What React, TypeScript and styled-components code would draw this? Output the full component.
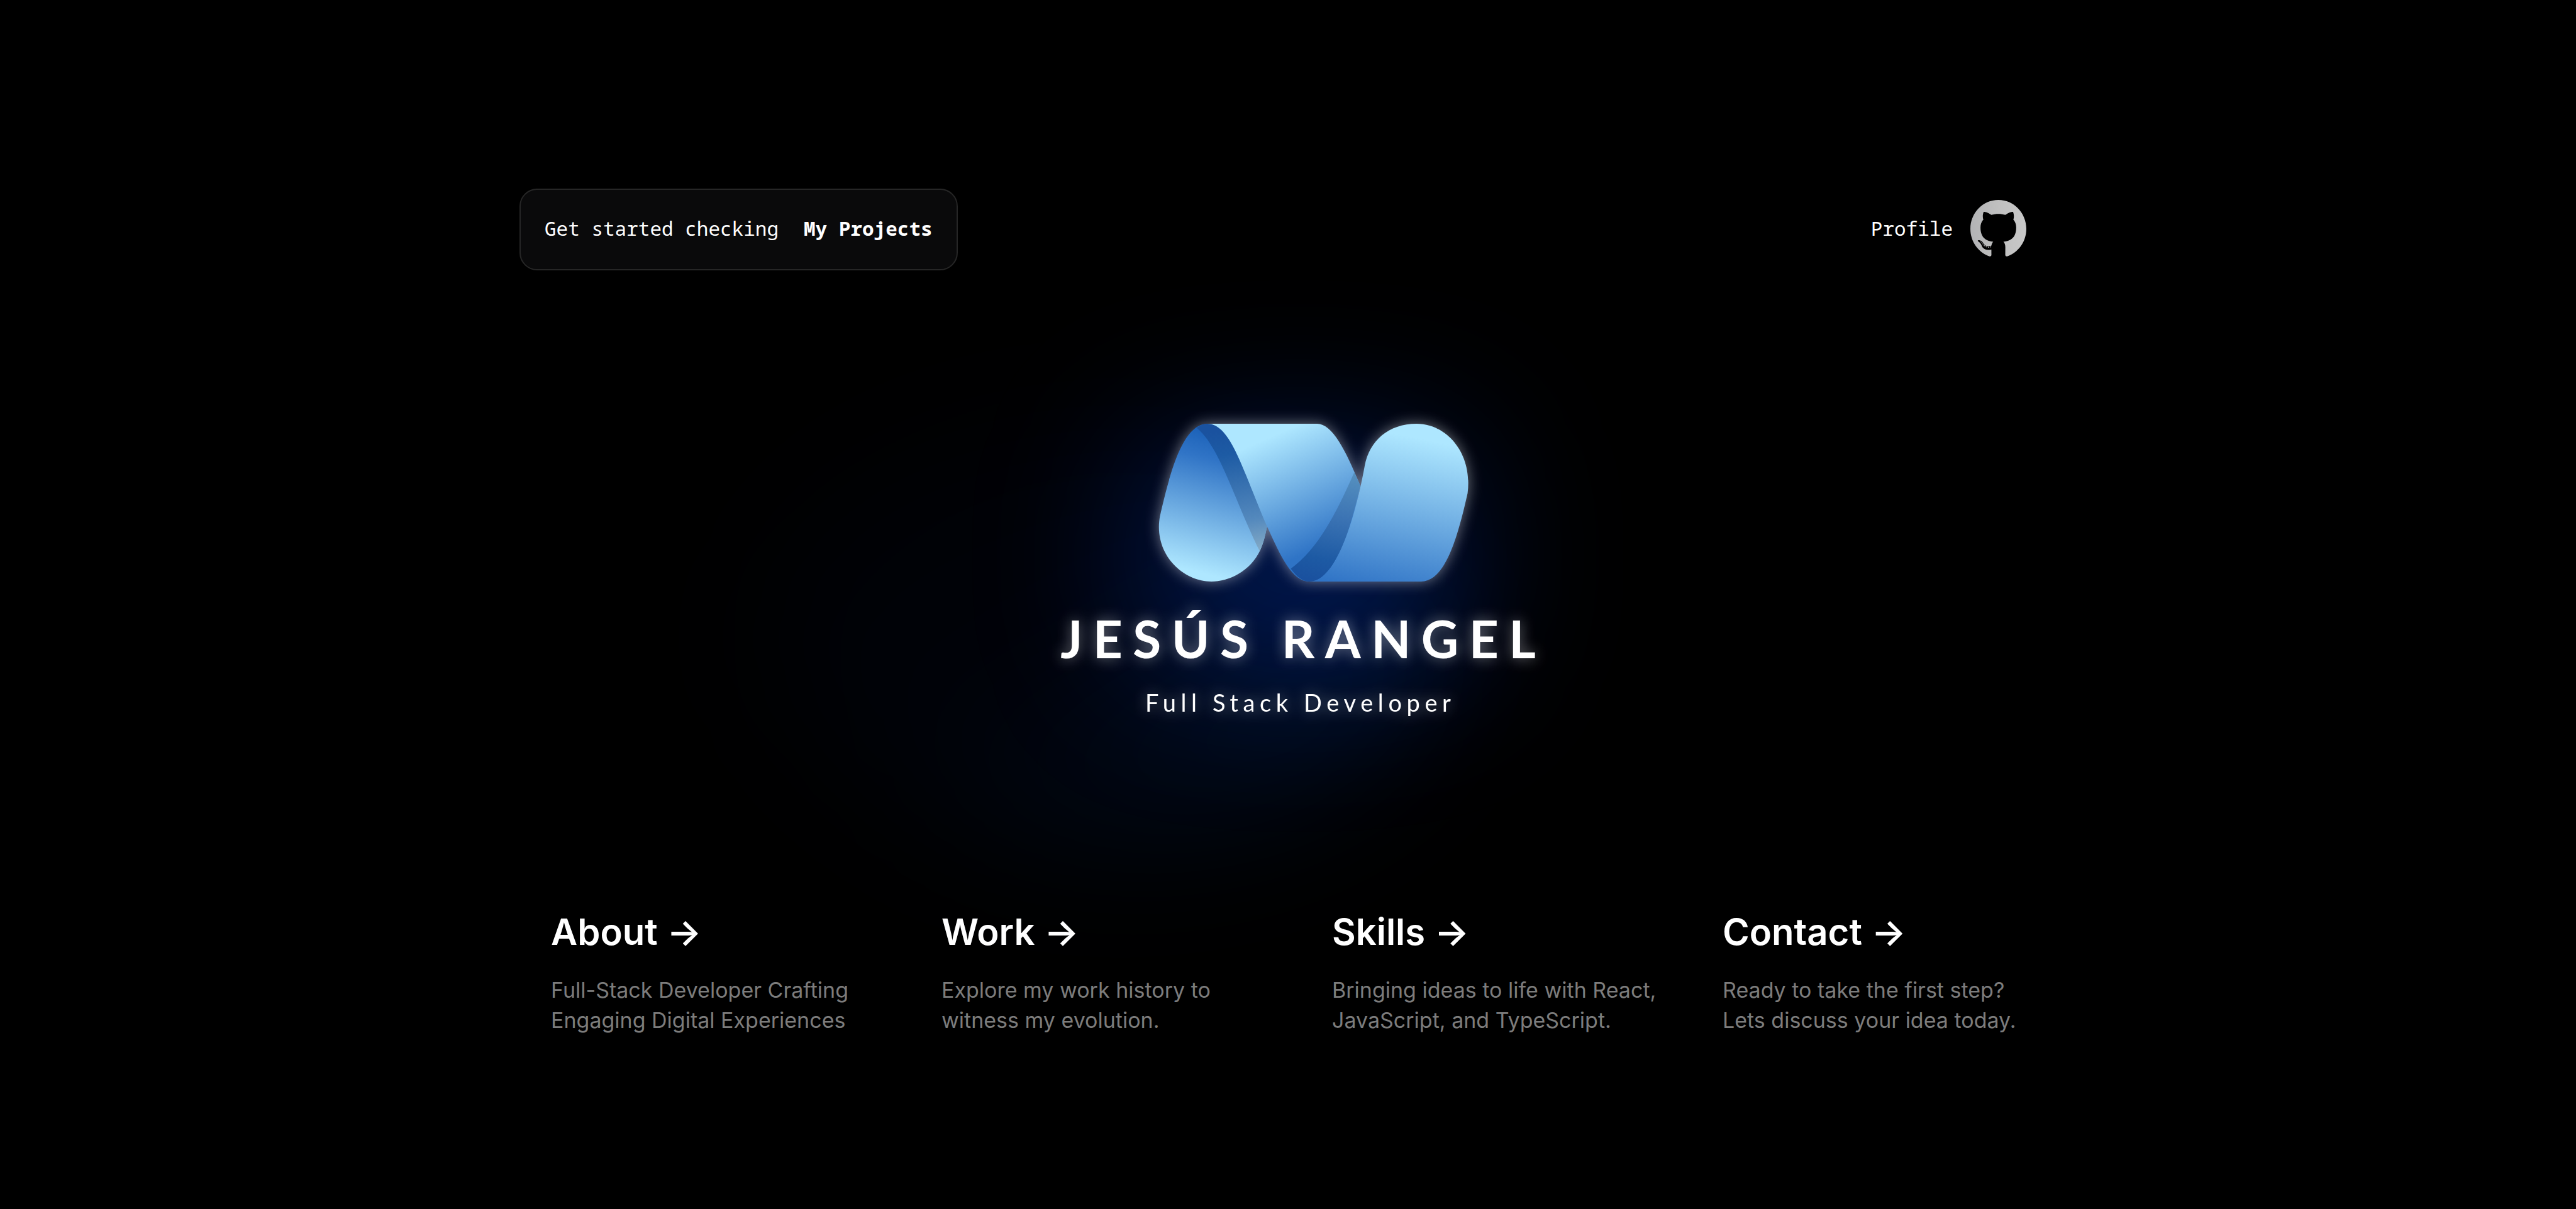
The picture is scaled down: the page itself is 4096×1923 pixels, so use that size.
import React from "react";
import styled, { createGlobalStyle } from "styled-components";

const GlobalStyle = createGlobalStyle`
  * { box-sizing: border-box; margin: 0; padding: 0; }
  body {
    background: #000;
    color: #fff;
    font-family: Inter, "Liberation Sans", sans-serif;
  }
  a { color: inherit; text-decoration: none; }
`;

const Page = styled.main`
  min-height: 100vh;
  display: flex;
  flex-direction: column;
  align-items: center;
  padding: 300px 24px 276px;
  overflow: hidden;
`;

const Header = styled.header`
  width: 100%;
  max-width: 2484px;
  display: flex;
  align-items: center;
  justify-content: space-between;
  padding: 0 68px 0 20px;
  font-family: "Noto Sans Mono", "DejaVu Sans Mono", monospace;
  font-size: 31px;
  line-height: 54px;
`;

const Intro = styled.p`
  display: flex;
  gap: 40px;
  padding: 34px 38px 38px;
  border: 2px solid #262626;
  border-radius: 28px;
  background: #0a0a0b;
  white-space: nowrap;
`;

const ProjectsLink = styled.a`
  font-weight: 700;
`;

const ProfileLink = styled.a`
  display: flex;
  align-items: center;
  gap: 28px;
  padding-bottom: 4px;
`;

const GithubMark = styled.svg`
  width: 89px;
  height: 90px;
`;

const Hero = styled.section`
  position: relative;
  z-index: 0;
  display: flex;
  flex-direction: column;
  align-items: center;
  margin-top: 244px;
  padding-left: 32px;

  &::before,
  &::after {
    content: "";
    position: absolute;
    z-index: -1;
    filter: blur(102px);
  }

  &::before {
    width: 1084px;
    height: 660px;
    right: 150px;
    top: 0;
    border-radius: 50%;
    background: linear-gradient(
      to bottom right,
      rgba(1, 65, 255, 0.02),
      rgba(1, 65, 255, 0.03),
      rgba(1, 90, 220, 0.2)
    );
  }

  &::after {
    width: 640px;
    height: 480px;
    left: 90px;
    top: -30px;
    background: radial-gradient(rgba(1, 70, 240, 0.37), rgba(1, 65, 255, 0));
  }
`;

const Emblem = styled.svg`
  width: 494px;
  height: 251px;
  margin-left: 50px;
  overflow: visible;
  filter: drop-shadow(0 0 11px rgba(255, 255, 255, 0.44));
`;

const Name = styled.h1`
  margin-top: 42px;
  font-family: Lato, "Liberation Sans", sans-serif;
  font-size: 82px;
  line-height: 96px;
  font-weight: 700;
  letter-spacing: 0.2em;
  margin-right: -0.2em;
  white-space: nowrap;
  filter: drop-shadow(0 0 11px rgba(255, 255, 255, 0.44));
`;

const Role = styled.p`
  margin-top: 30px;
  font-family: Lato, "Liberation Sans", sans-serif;
  font-size: 38px;
  line-height: 48px;
  font-weight: 400;
  letter-spacing: 0.2em;
  margin-right: -0.2em;
  white-space: nowrap;
  filter: drop-shadow(0 0 11px rgba(255, 255, 255, 0.44));
`;

const Cards = styled.nav`
  width: 100%;
  max-width: 2484px;
  margin-top: auto;
  display: grid;
  grid-template-columns: repeat(4, minmax(25%, auto));
`;

const Card = styled.a`
  display: block;
  padding: 0 24px 0 70px;
`;

const CardTitle = styled.h2`
  font-size: 58px;
  line-height: 70px;
  font-weight: 600;
`;

const CardText = styled.p`
  margin-top: 34px;
  font-size: 34px;
  line-height: 48px;
  color: #7c7c7c;
`;

const cards = [
  { title: "About", lines: ["Full-Stack Developer Crafting", "Engaging Digital Experiences"] },
  { title: "Work", lines: ["Explore my work history to", "witness my evolution."] },
  { title: "Skills", lines: ["Bringing ideas to life with React,", "JavaScript, and TypeScript."] },
  { title: "Contact", lines: ["Ready to take the first step?", "Lets discuss your idea today."] },
];

function GithubIcon() {
  return (
    <GithubMark viewBox="3.6 5.1 120.8 118" preserveAspectRatio="none" aria-hidden="true">
      <defs>
        <linearGradient id="silver" x1="0" x2="1" y1="0" y2="0">
          <stop offset="0" stopColor="#b2b3b5" />
          <stop offset="0.5" stopColor="#c0c0c0" />
          <stop offset="1" stopColor="#c8c8c8" />
        </linearGradient>
      </defs>
      <path
        fill="url(#silver)"
        fillRule="evenodd"
        d="M64 5.103c-33.347 0-60.388 27.035-60.388 60.388 0 26.682 17.303 49.317 41.297 57.303 3.017.56 4.125-1.31 4.125-2.905 0-1.44-.056-6.197-.082-11.243-16.8 3.653-20.345-7.125-20.345-7.125-2.747-6.98-6.705-8.836-6.705-8.836-5.48-3.748.413-3.67.413-3.67 6.063.425 9.257 6.223 9.257 6.223 5.386 9.23 14.127 6.562 17.573 5.02.542-3.903 2.107-6.568 3.834-8.076-13.413-1.525-27.514-6.704-27.514-29.843 0-6.593 2.36-11.98 6.223-16.21-.628-1.52-2.695-7.662.584-15.98 0 0 5.07-1.623 16.61 6.19C53.7 35 58.867 34.327 64 34.304c5.13.023 10.3.694 15.127 2.033 11.526-7.813 16.59-6.19 16.59-6.19 3.287 8.317 1.22 14.46.593 15.98 3.872 4.23 6.215 9.617 6.215 16.21 0 23.194-14.127 28.3-27.574 29.796 2.167 1.874 4.097 5.55 4.097 11.183 0 8.08-.07 14.583-.07 16.572 0 1.607 1.088 3.49 4.148 2.897 23.98-7.994 41.263-30.622 41.263-57.294C124.388 32.14 97.35 5.104 64 5.104z"
      />
      <path
        fill="url(#silver)"
        d="M26.484 91.806c-.133.3-.605.39-1.035.185-.44-.196-.685-.605-.543-.906.13-.31.603-.395 1.04-.188.44.197.69.61.537.91zm2.446 2.729c-.287.267-.85.143-1.232-.28-.396-.42-.47-.983-.177-1.254.298-.266.844-.14 1.24.28.394.426.472.984.17 1.255zM31.312 98.012c-.37.258-.976.017-1.35-.52-.37-.538-.37-1.183.01-1.44.373-.258.97-.025 1.35.507.368.545.368 1.19-.01 1.452zm3.261 3.361c-.33.365-1.036.267-1.552-.23-.527-.487-.674-1.18-.343-1.544.336-.366 1.045-.264 1.564.23.527.486.686 1.18.333 1.543zm4.5 1.951c-.147.473-.825.688-1.51.486-.683-.207-1.13-.76-.99-1.238.14-.477.823-.7 1.512-.485.683.206 1.13.756.988 1.237zm4.943.361c.017.498-.563.91-1.28.92-.723.017-1.308-.387-1.315-.877 0-.503.568-.91 1.29-.924.717-.013 1.306.387 1.306.88zm4.598-.782c.086.485-.413.984-1.126 1.117-.7.13-1.35-.172-1.44-.653-.086-.498.422-.997 1.122-1.126.714-.123 1.354.17 1.444.663z"
      />
    </GithubMark>
  );
}

function Ribbon() {
  return (
    <Emblem viewBox="80 84 1420 968" preserveAspectRatio="none" aria-hidden="true">
      <defs>
        <linearGradient id="leaf" gradientUnits="userSpaceOnUse" x1="410" y1="150" x2="150" y2="960">
          <stop offset="0" stopColor="#1b61b8" />
          <stop offset="0.2" stopColor="#3074c6" />
          <stop offset="1" stopColor="#aee7ff" />
        </linearGradient>
        <linearGradient id="band" gradientUnits="userSpaceOnUse" x1="575" y1="175" x2="931" y2="776">
          <stop offset="0" stopColor="#aee7ff" />
          <stop offset="1" stopColor="#2f74c6" />
        </linearGradient>
        <linearGradient id="pill" gradientUnits="userSpaceOnUse" x1="1330" y1="190" x2="1080" y2="1110">
          <stop offset="0" stopColor="#aee7ff" />
          <stop offset="1" stopColor="#3074c6" />
        </linearGradient>
        <linearGradient id="foldLeft" gradientUnits="userSpaceOnUse" x1="350" y1="130" x2="530" y2="860">
          <stop offset="0" stopColor="#1a529f" />
          <stop offset="0.2" stopColor="#1d5ba4" />
          <stop offset="0.75" stopColor="#5489bd" />
          <stop offset="1" stopColor="#83aac6" />
        </linearGradient>
        <linearGradient id="foldRight" gradientUnits="userSpaceOnUse" x1="960" y1="390" x2="780" y2="1040">
          <stop offset="0" stopColor="#5590bf" />
          <stop offset="0.4" stopColor="#3c74b4" />
          <stop offset="0.8" stopColor="#1d5aa4" />
          <stop offset="1" stopColor="#1a519f" />
        </linearGradient>
      </defs>
      <path
        fill="url(#leaf)"
        d="M305 84C190 84 133 385 87 650C55 880 190 1052 322 1052C400 1052 500 990 545 860C565 800 567 770 577 712C520 500 400 100 305 84Z"
      />
      <path
        fill="url(#foldLeft)"
        d="M305 84C287 84 270 94 255 109C360 225 420 530 543 866C563 805 567 770 577 712C520 500 440 84 305 84Z"
      />
      <path
        fill="url(#band)"
        d="M305 84H805C875 84 935 245 1003 465C960 760 890 1052 770 1052C690 1052 640 900 575 710C515 520 480 390 440 275C400 155 355 84 305 84Z"
      />
      <path
        fill="url(#foldRight)"
        d="M975 382C890 640 810 850 685 973C713 1025 740 1052 770 1052C890 1052 950 760 1003 465Z"
      />
      <path
        fill="url(#pill)"
        d="M770 1052H1280C1390 1052 1446 790 1493 510C1517 260 1395 84 1260 84C1130 84 1045 190 1023 340C985 620 900 1052 770 1052Z"
      />
    </Emblem>
  );
}

export default function App() {
  return (
    <>
      <GlobalStyle />
      <Page>
        <Header>
          <Intro>
            <span>Get started checking</span>
            <ProjectsLink href="#projects">My Projects</ProjectsLink>
          </Intro>
          <ProfileLink href="#profile">
            Profile
            <GithubIcon />
          </ProfileLink>
        </Header>
        <Hero>
          <Ribbon />
          <Name>JESÚS RANGEL</Name>
          <Role>Full Stack Developer</Role>
        </Hero>
        <Cards>
          {cards.map((card) => (
            <Card key={card.title} href={`#${card.title.toLowerCase()}`}>
              <CardTitle>{card.title} →</CardTitle>
              <CardText>
                {card.lines[0]}
                <br />
                {card.lines[1]}
              </CardText>
            </Card>
          ))}
        </Cards>
      </Page>
    </>
  );
}
